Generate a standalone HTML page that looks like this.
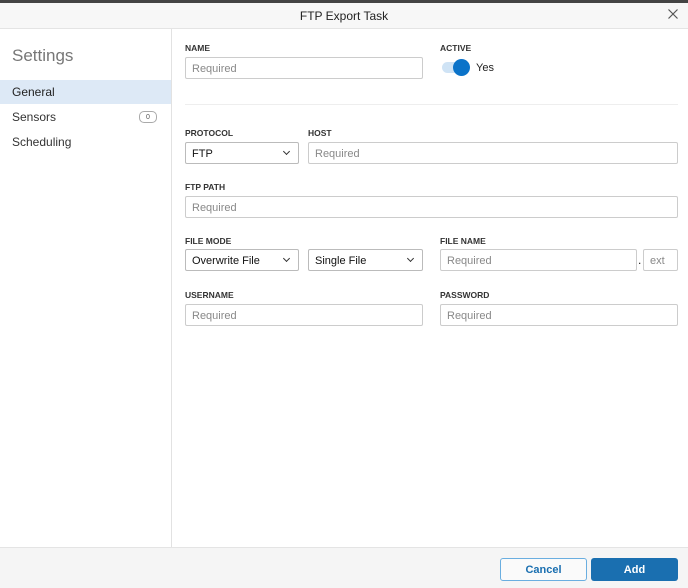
<!DOCTYPE html><html><head><style>
*{box-sizing:border-box;margin:0;padding:0}
body{width:688px;height:588px;overflow:hidden;background:#fff;font-family:"Liberation Sans",sans-serif;position:relative;color:#222}
.a{position:absolute}
.lbl{position:absolute;font-size:8.5px;font-weight:bold;color:#333}
.in{position:absolute;height:22px;border:1px solid #ccc;border-radius:2px;font-size:11px;color:#888;padding:5px 6px;background:#fff}
.sel{position:absolute;height:22px;border:1px solid #bbb;border-radius:2px;font-size:11px;color:#111;padding:5px 6px;background:#fff}
.sel:after{content:"";position:absolute;right:9px;top:6px;width:4px;height:4px;border-right:1.3px solid #333;border-bottom:1.3px solid #333;transform:rotate(45deg)}
</style></head><body>
<div class="a" style="left:0;top:0;width:688px;height:3px;background:#444"></div>
<div class="a" style="left:0;top:3px;width:688px;height:26px;background:#f7f7f7;border-bottom:1px solid #e4e4e4;text-align:center;font-size:12px;line-height:26px">FTP Export Task</div>
<svg class="a" style="left:668px;top:9px" width="10" height="10" viewBox="0 0 10 10"><path d="M0.5 0.5L9.5 9.5M9.5 0.5L0.5 9.5" stroke="#555" stroke-width="1.2"/></svg>
<div class="a" style="left:171px;top:29px;width:1px;height:519px;background:#e2e2e2"></div>
<div class="a" style="left:12px;top:46px;font-size:17px;color:#777">Settings</div>
<div class="a" style="left:0;top:80px;width:171px;height:24px;background:#dde9f6"></div>
<div class="a" style="left:12px;top:85px;font-size:12px">General</div>
<div class="a" style="left:12px;top:110px;font-size:12px;color:#333">Sensors</div>
<div class="a" style="left:139px;top:111px;width:18px;height:12px;border:1px solid #aaa;border-radius:5px;font-size:7px;text-align:center;line-height:11px;color:#555">0</div>
<div class="a" style="left:12px;top:135px;font-size:12px;color:#333">Scheduling</div>

<div class="lbl" style="left:185px;top:43px">NAME</div>
<div class="in" style="left:185px;top:57px;width:238px">Required</div>
<div class="lbl" style="left:440px;top:43px">ACTIVE</div>
<div class="a" style="left:442px;top:62px;width:26px;height:11px;border-radius:6px;background:#cfe3f5"></div>
<div class="a" style="left:453px;top:59px;width:17px;height:17px;border-radius:50%;background:#0b73c9"></div>
<div class="a" style="left:476px;top:62px;font-size:11px">Yes</div>
<div class="a" style="left:185px;top:104px;width:493px;height:1px;background:#eee"></div>

<div class="lbl" style="left:185px;top:128px">PROTOCOL</div>
<div class="sel" style="left:185px;top:142px;width:114px">FTP</div>
<div class="lbl" style="left:308px;top:128px">HOST</div>
<div class="in" style="left:308px;top:142px;width:370px">Required</div>

<div class="lbl" style="left:185px;top:182px">FTP PATH</div>
<div class="in" style="left:185px;top:196px;width:493px">Required</div>

<div class="lbl" style="left:185px;top:236px">FILE MODE</div>
<div class="sel" style="left:185px;top:249px;width:114px">Overwrite File</div>
<div class="sel" style="left:308px;top:249px;width:115px">Single File</div>
<div class="lbl" style="left:440px;top:236px">FILE NAME</div>
<div class="in" style="left:440px;top:249px;width:197px">Required</div>
<div class="a" style="left:638px;top:253px;font-size:12px">.</div>
<div class="in" style="left:643px;top:249px;width:35px">ext</div>

<div class="lbl" style="left:185px;top:290px">USERNAME</div>
<div class="in" style="left:185px;top:304px;width:238px">Required</div>
<div class="lbl" style="left:440px;top:290px">PASSWORD</div>
<div class="in" style="left:440px;top:304px;width:238px">Required</div>

<div class="a" style="left:0;top:547px;width:688px;height:41px;background:#f5f5f5;border-top:1px solid #e4e4e4"></div>
<div class="a" style="left:500px;top:558px;width:87px;height:23px;border:1px solid #6aaee0;border-radius:3px;background:#fafafa;color:#1a6fb0;font-size:11px;font-weight:bold;text-align:center;line-height:22px">Cancel</div>
<div class="a" style="left:591px;top:558px;width:87px;height:23px;border-radius:3px;background:#1a6fb0;color:#fff;font-size:11px;font-weight:bold;text-align:center;line-height:24px">Add</div>
</body></html>
